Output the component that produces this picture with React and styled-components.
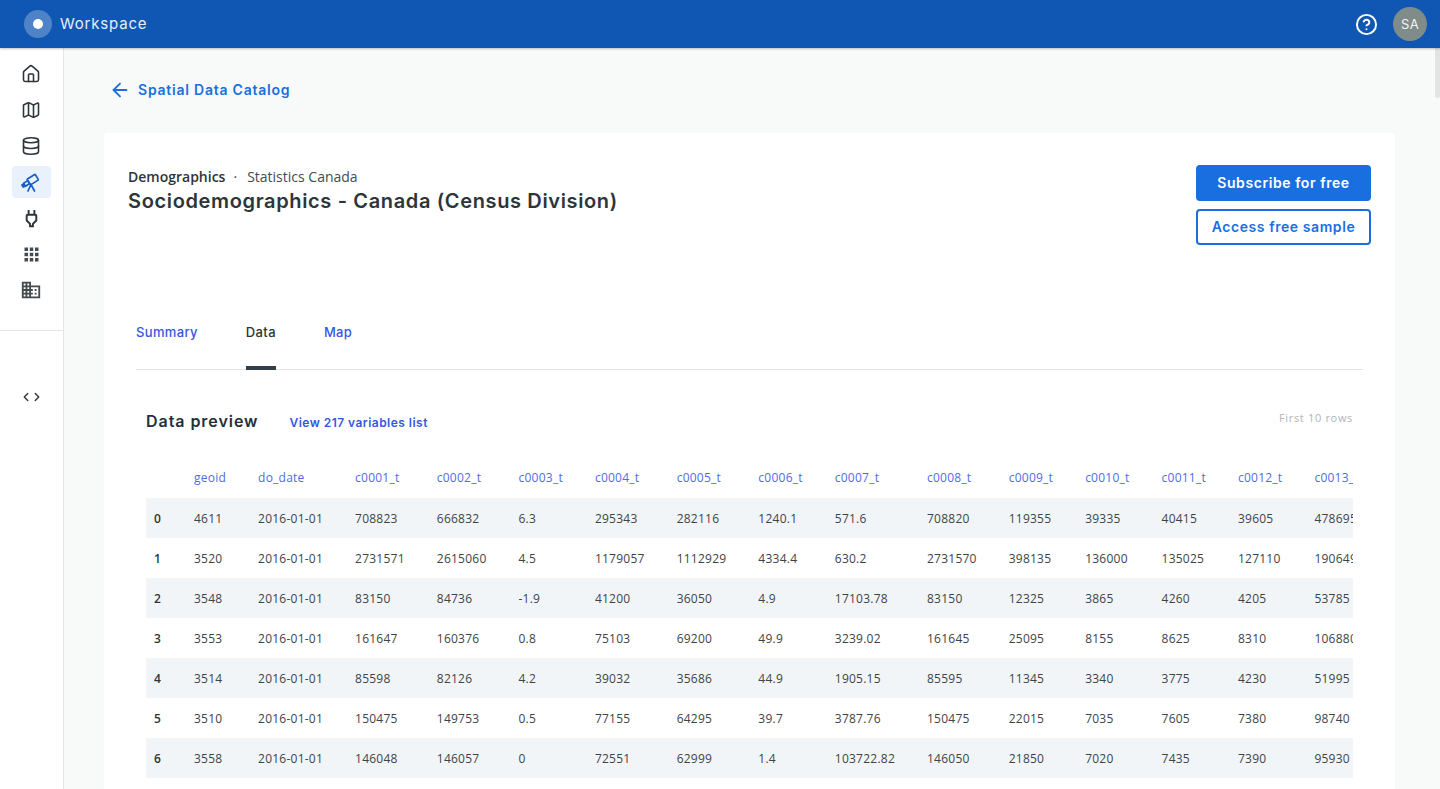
import React from 'react'
import styled, { createGlobalStyle } from 'styled-components'
import { House, Map, Database, ArrowLeft, CircleHelp, ChevronLeft, ChevronRight } from 'lucide-react'
import { MdApps, MdOutlineDomain, MdOutlinePower } from 'react-icons/md'

const GlobalStyle = createGlobalStyle`
  html, body { margin: 0; padding: 0; height: 100%; overflow: hidden; }
  body { font-family: "Open Sans", "Liberation Sans", sans-serif; color: #2c3539; }
  * { box-sizing: border-box; }
`

const columns = ['geoid', 'do_date', 'c0001_t', 'c0002_t', 'c0003_t', 'c0004_t', 'c0005_t', 'c0006_t', 'c0007_t', 'c0008_t', 'c0009_t', 'c0010_t', 'c0011_t', 'c0012_t', 'c0013_t']

const rows = [
  ['4611', '2016-01-01', '708823', '666832', '6.3', '295343', '282116', '1240.1', '571.6', '708820', '119355', '39335', '40415', '39605', '478695'],
  ['3520', '2016-01-01', '2731571', '2615060', '4.5', '1179057', '1112929', '4334.4', '630.2', '2731570', '398135', '136000', '135025', '127110', '1906490'],
  ['3548', '2016-01-01', '83150', '84736', '-1.9', '41200', '36050', '4.9', '17103.78', '83150', '12325', '3865', '4260', '4205', '53785'],
  ['3553', '2016-01-01', '161647', '160376', '0.8', '75103', '69200', '49.9', '3239.02', '161645', '25095', '8155', '8625', '8310', '106880'],
  ['3514', '2016-01-01', '85598', '82126', '4.2', '39032', '35686', '44.9', '1905.15', '85595', '11345', '3340', '3775', '4230', '51995'],
  ['3510', '2016-01-01', '150475', '149753', '0.5', '77155', '64295', '39.7', '3787.76', '150475', '22015', '7035', '7605', '7380', '98740'],
  ['3558', '2016-01-01', '146048', '146057', '0', '72551', '62999', '1.4', '103722.82', '146050', '21850', '7020', '7435', '7390', '95930'],
]

// lucide's telescope sits too flat, this one follows the reference
const TelescopeIcon = () => (
  <svg width="20" height="20" viewBox="0 0 20 20" fill="none" stroke="currentColor" strokeWidth="1.7" strokeLinejoin="round" strokeLinecap="round">
    <g transform="rotate(-32 10 9)">
      <rect x="7.5" y="5.5" width="9.5" height="6.5" rx="0.5" />
      <rect x="2.5" y="7" width="5" height="3.5" />
      <rect x="0.2" y="7.6" width="1.6" height="2.4" fill="currentColor" />
    </g>
    <path d="M10 12.5l-3 6.5M10 12.5l3.5 6.5" />
  </svg>
)

const navItems = [
  { icon: <House size={20} strokeWidth={1.9} /> },
  { icon: <Map size={20} strokeWidth={1.9} /> },
  { icon: <Database size={20} strokeWidth={1.9} /> },
  { icon: <TelescopeIcon />, active: true },
  { icon: <MdOutlinePower size={23} /> },
  { icon: <MdApps size={21} />, soft: true },
  { icon: <MdOutlineDomain size={22} />, soft: true },
]

const Page = styled.div`
  display: flex;
  flex-direction: column;
  height: 100vh;
  overflow: hidden;
`
const TopBar = styled.header`
  display: flex;
  align-items: center;
  flex: 0 0 48px;
  padding: 0 13px 0 24px;
  background: #1057b3;
  box-shadow: 0 1px 2px rgba(0, 0, 0, 0.25);
  position: relative;
  z-index: 2;
`
const Logo = styled.div`
  display: flex;
  align-items: center;
  justify-content: center;
  width: 28px;
  height: 28px;
  border-radius: 50%;
  background: #4f83c8;
  &::after {
    content: '';
    width: 10px;
    height: 10px;
    border-radius: 50%;
    background: #fff;
  }
`
const Brand = styled.span`
  margin: 0 0 2px 8px;
  font-family: Inter, "Liberation Sans", sans-serif;
  font-size: 15px;
  letter-spacing: 0.8px;
  color: #e6eef8;
`
const TopActions = styled.div`
  display: flex;
  align-items: center;
  gap: 15px;
  margin-left: auto;
  color: #fff;
`
const Avatar = styled.div`
  display: flex;
  align-items: center;
  justify-content: center;
  width: 34px;
  height: 34px;
  border-radius: 50%;
  background: #7f8c8a;
  color: #f2f4f4;
  font-family: Inter, "Liberation Sans", sans-serif;
  font-size: 13px;
  letter-spacing: 0.3px;
`
const Body = styled.div`
  display: flex;
  flex: 1;
  min-height: 0;
  position: relative;
`
const Sidebar = styled.aside`
  flex: 0 0 64px;
  padding-top: 10px;
  background: #fff;
  border-right: 1px solid #e3e6e7;
`
const Nav = styled.nav`
  display: flex;
  flex-direction: column;
  align-items: center;
  gap: 4px;
  padding: 0 0 24px;
  margin-left: -1px;
`
const NavItem = styled.div`
  display: flex;
  align-items: center;
  justify-content: center;
  width: 39px;
  height: 32px;
  border-radius: 4px;
  background: ${p => (p.$active ? '#e8f1fc' : 'transparent')};
  color: ${p => (p.$active ? '#1a5fc0' : p.$soft ? '#444a4d' : '#2c3539')};
`
const SideDivider = styled.div`
  height: 1px;
  background: #e3e6e7;
`
const CodeItem = styled.div`
  display: flex;
  align-items: center;
  justify-content: center;
  margin: 59px 0 0 -1px;
  color: #2c3539;
  svg + svg {
    margin-left: -3px;
  }
`
const Main = styled.main`
  flex: 1;
  min-width: 0;
  padding: 0 45px 0 40px;
  background: #f8f9f9;
  overflow: hidden;
`
const BackLink = styled.a`
  display: flex;
  align-items: center;
  gap: 7px;
  height: 85px;
  padding: 0 0 2px 5px;
  font-family: Inter, "Liberation Sans", sans-serif;
  font-size: 14px;
  font-weight: 600;
  letter-spacing: 0.77px;
  color: #1a6fe0;
`
const Card = styled.section`
  padding: 32px 24px 40px;
  background: #fff;
  border-radius: 4px;
`
const CardHead = styled.div`
  display: flex;
  justify-content: space-between;
  align-items: flex-start;
`
const Crumbs = styled.div`
  margin-top: 3px;
  font-size: 14px;
  line-height: 18px;
  color: #444c50;
  b {
    font-weight: 600;
    color: #2c3539;
  }
  i {
    font-style: normal;
    margin: 0 10px 0 8px;
  }
`
const Title = styled.h1`
  margin: 2px 0 0;
  font-family: Inter, "Liberation Sans", sans-serif;
  font-size: 20px;
  line-height: 26px;
  font-weight: 600;
  letter-spacing: 0.64px;
  color: #2c3539;
`
const Buttons = styled.div`
  display: flex;
  flex-direction: column;
  gap: 8px;
  width: 175px;
`
const Button = styled.button`
  height: 36px;
  padding: 0 0 2px;
  border-radius: 4px;
  border: 2px solid #1a6fe0;
  background: ${p => (p.$outline ? '#fff' : '#1a6fe0')};
  color: ${p => (p.$outline ? '#1a6fe0' : '#fff')};
  font-family: Inter, "Liberation Sans", sans-serif;
  font-size: 14px;
  font-weight: 600;
  letter-spacing: 0.57px;
`
const Tabs = styled.div`
  display: flex;
  gap: 48px;
  height: 63px;
  margin: 62px 8px 0;
  border-bottom: 1px solid #e3e6e7;
`
const Tab = styled.a`
  height: 63px;
  padding-top: 17px;
  border-bottom: ${p => (p.$active ? '4px solid #2f3e48' : '0')};
  font-family: Inter, "Liberation Sans", sans-serif;
  font-size: 13px;
  line-height: 16px;
  font-weight: 500;
  letter-spacing: 0.35px;
  color: ${p => (p.$active ? '#2c3539' : '#3557e0')};
`
const Preview = styled.div`
  margin: 0 18px;
`
const PreviewHead = styled.div`
  display: flex;
  align-items: center;
  height: 88px;
  padding-top: 14px;
`
const PreviewTitle = styled.h2`
  margin: 0;
  font-family: Inter, "Liberation Sans", sans-serif;
  font-size: 16px;
  font-weight: 600;
  letter-spacing: 0.95px;
  color: #22303c;
`
const VariablesLink = styled.a`
  margin: 2px 0 0 31px;
  font-family: Inter, "Liberation Sans", sans-serif;
  font-size: 12px;
  font-weight: 600;
  letter-spacing: 0.47px;
  color: #3557e0;
`
const RowsNote = styled.span`
  margin: -8px 0 0 auto;
  font-size: 11px;
  letter-spacing: 0.67px;
  color: #b0b4b6;
`
const TableClip = styled.div`
  overflow: hidden;
`
const Table = styled.table`
  border-collapse: collapse;
  font-size: 12px;
  letter-spacing: 0.24px;
  white-space: nowrap;
`
const HeadCell = styled.th`
  height: 40px;
  padding: 0 16px 1px;
  text-align: left;
  font-weight: 400;
  color: #4f6bea;
`
const Row = styled.tr`
  background: ${p => (p.$striped ? '#f2f5f8' : '#fff')};
`
const IndexCell = styled.td`
  height: 40px;
  padding: 0 13px 0 8px;
  font-weight: 600;
  color: #2c3539;
`
const Cell = styled.td`
  height: 40px;
  padding: 0 16px;
  color: #3d4447;
`
const ScrollThumb = styled.div`
  position: absolute;
  top: 0;
  right: 0;
  width: 5px;
  height: 50px;
  border-radius: 0 0 3px 3px;
  background: #e2e4e4;
`

export default function App() {
  return (
    <Page>
      <GlobalStyle />
      <TopBar>
        <Logo />
        <Brand>Workspace</Brand>
        <TopActions>
          <CircleHelp size={23} strokeWidth={2} />
          <Avatar>SA</Avatar>
        </TopActions>
      </TopBar>
      <Body>
        <Sidebar>
          <Nav>
            {navItems.map((item, i) => (
              <NavItem key={i} $active={item.active} $soft={item.soft}>{item.icon}</NavItem>
            ))}
          </Nav>
          <SideDivider />
          <CodeItem>
            <ChevronLeft size={14} strokeWidth={2.4} />
            <ChevronRight size={14} strokeWidth={2.4} />
          </CodeItem>
        </Sidebar>
        <Main>
          <BackLink>
            <ArrowLeft size={22} strokeWidth={2} />
            Spatial Data Catalog
          </BackLink>
          <Card>
            <CardHead>
              <div>
                <Crumbs><b>Demographics</b><i>·</i>Statistics Canada</Crumbs>
                <Title>Sociodemographics - Canada (Census Division)</Title>
              </div>
              <Buttons>
                <Button>Subscribe for free</Button>
                <Button $outline>Access free sample</Button>
              </Buttons>
            </CardHead>
            <Tabs>
              <Tab>Summary</Tab>
              <Tab $active>Data</Tab>
              <Tab>Map</Tab>
            </Tabs>
            <Preview>
              <PreviewHead>
                <PreviewTitle>Data preview</PreviewTitle>
                <VariablesLink>View 217 variables list</VariablesLink>
                <RowsNote>First 10 rows</RowsNote>
              </PreviewHead>
              <TableClip>
                <Table>
                  <thead>
                    <tr>
                      <HeadCell />
                      {columns.map(c => <HeadCell key={c}>{c}</HeadCell>)}
                    </tr>
                  </thead>
                  <tbody>
                    {rows.map((row, i) => (
                      <Row key={i} $striped={i % 2 === 0}>
                        <IndexCell>{i}</IndexCell>
                        {row.map((v, j) => <Cell key={j}>{v}</Cell>)}
                      </Row>
                    ))}
                  </tbody>
                </Table>
              </TableClip>
            </Preview>
          </Card>
        </Main>
        <ScrollThumb />
      </Body>
    </Page>
  )
}
